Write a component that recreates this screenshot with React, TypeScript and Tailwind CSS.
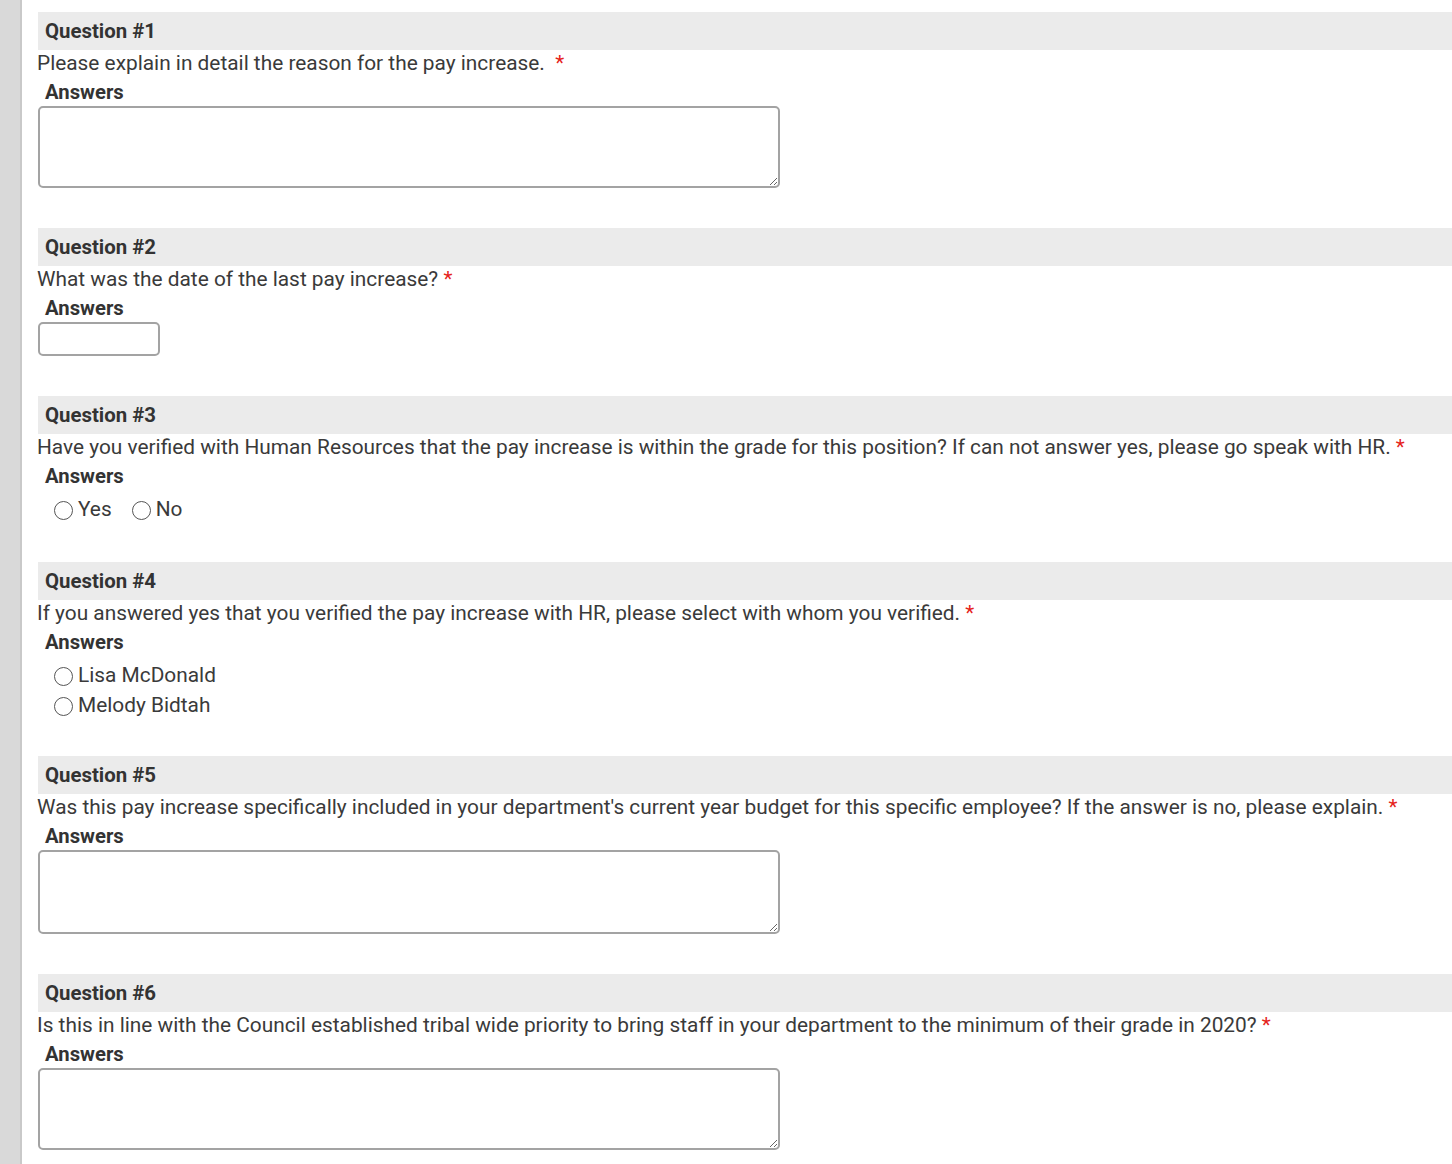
import React from "react";

const Star = () => <span className="text-[#e5231b]">*</span>;

function Header({ n }: { n: number }) {
  return (
    <div className="h-[38px] bg-[#ebebeb] pl-[7px] flex items-center font-bold text-[20.4px] text-[#333]">
      Question #{n}
    </div>
  );
}

function QText({ children }: { children: React.ReactNode }) {
  return <div className="-ml-[1px] leading-[26px] text-[20.85px] text-[#3a3a3a]">{children}</div>;
}

function Answers() {
  return <div className="mt-[3px] pl-[7px] leading-[26px] font-bold text-[20.3px] text-[#333]">Answers</div>;
}

function TA({ h = "h-[82px]" }: { h?: string }) {
  return (
    <textarea className={"mt-[1px] block w-[742px] border-2 border-[#a3a3a3] rounded-[5px] bg-white resize-y outline-none " + h} />
  );
}

function Radio({ label, className = "" }: { label: string; className?: string }) {
  return (
    <label className={"flex items-center h-[26px] text-[20.85px] text-[#3a3a3a] " + className}>
      <span className="w-[19px] h-[19px] rounded-full border-[1.5px] border-[#555] bg-white mr-[5px]" />
      {label}
    </label>
  );
}

export default function App() {
  return (
    <div className="flex min-h-[1164px] bg-white" style={{ fontFamily: "Roboto, 'Liberation Sans', sans-serif" }}>
      <div className="w-[22px] shrink-0 bg-[#d9d9d9] border-r-2 border-[#c9c9c9]" />
      <div className="flex-1 pl-[16px] pt-[12px]">
        <Header n={1} />
        <QText>Please explain in detail the reason for the pay increase.&nbsp; <Star /></QText>
        <Answers />
        <TA />

        <div className="mt-[40px]" />
        <Header n={2} />
        <QText>What was the date of the last pay increase? <Star /></QText>
        <Answers />
        <input className="mt-[1px] block w-[122px] h-[34px] border-2 border-[#a3a3a3] rounded-[5px] bg-white outline-none" />

        <div className="mt-[40px]" />
        <Header n={3} />
        <QText>
          Have you verified with Human Resources that the pay increase is within the grade for this position? If can not answer yes, please go speak with HR. <Star />
        </QText>
        <Answers />
        <div className="mt-[8px] flex pl-[16px] gap-[20px]">
          <Radio label="Yes" />
          <Radio label="No" />
        </div>

        <div className="mt-[39px]" />
        <Header n={4} />
        <QText>
          If you answered yes that you verified the pay increase with HR, please select with whom you verified. <Star />
        </QText>
        <Answers />
        <div className="mt-[8px] flex flex-col gap-[4px] pl-[16px]">
          <Radio label="Lisa McDonald" />
          <Radio label="Melody Bidtah" />
        </div>

        <div className="mt-[37px]" />
        <Header n={5} />
        <QText>
          Was this pay increase specifically included in your department's current year budget for this specific employee? If the answer is no, please explain. <Star />
        </QText>
        <Answers />
        <TA h="h-[84px]" />

        <div className="mt-[40px]" />
        <Header n={6} />
        <QText>
          Is this in line with the Council established tribal wide priority to bring staff in your department to the minimum of their grade in 2020? <Star />
        </QText>
        <Answers />
        <TA />
      </div>
    </div>
  );
}
